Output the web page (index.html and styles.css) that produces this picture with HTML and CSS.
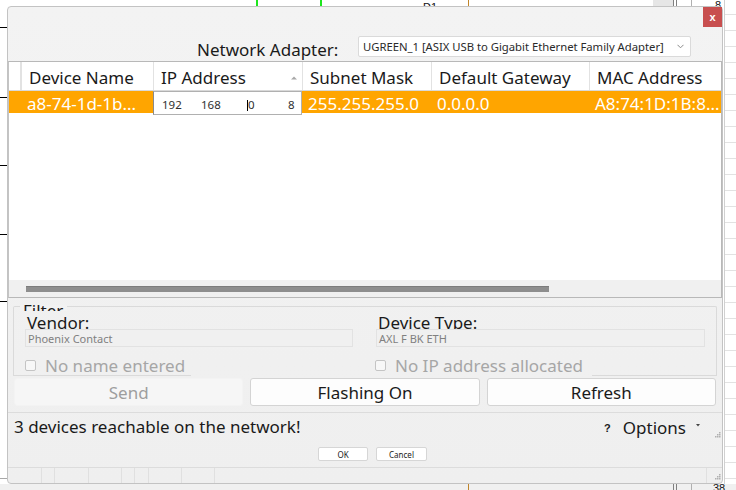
FILE: index.html
```html
<!DOCTYPE html>
<html lang="en">
<head>
  <meta charset="UTF-8">
  <title>Network Adapter</title>
  <link rel="stylesheet" href="styles.css">
</head>
<body>

  <!-- spreadsheet behind the dialog -->
  <div class="sheet">
    <span class="band"></span>
    <span class="tick t1"></span>
    <span class="tick t2"></span>
    <span class="tick t3"></span>
    <span class="tick t4"></span>
    <span class="tick t5"></span>
    <span class="tick t6"></span>
    <span class="green g1"></span>
    <span class="green g2"></span>
    <span class="cell-ref">D1</span>
    <span class="vline orange"></span>
    <span class="shade"></span>
    <span class="vline dark d1"></span>
    <span class="vline dark d2"></span>
    <span class="vline grey"></span>
    <span class="num n1">8</span>
    <span class="num n2">38</span>
    <span class="rows"></span>
  </div>

  <div class="dialog">
    <div class="titlebar">
      <button class="close">x</button>
    </div>

    <div class="adapter">
      <div class="adapter-label">Network Adapter:</div>
      <div class="combo">
        <span class="combo-text">UGREEN_1 [ASIX USB to Gigabit Ethernet Family Adapter]</span>
        <svg width="7" height="5" viewBox="0 0 7 5"><polyline points="0.5,0.8 3.5,3.8 6.5,0.8" fill="none" stroke="#8a8a8a" stroke-width="1"/></svg>
      </div>
    </div>

    <div class="grid">
      <div class="thead">
        <div class="th corner"></div>
        <div class="th">Device Name</div>
        <div class="th th-sort">IP Address
          <svg width="6" height="4" viewBox="0 0 6 4"><polygon points="0,3.5 3,0.5 6,3.5" fill="#a8a8a8"/></svg>
        </div>
        <div class="th">Subnet Mask</div>
        <div class="th">Default Gateway</div>
        <div class="th">MAC Address</div>
      </div>
      <div class="trow">
        <div class="td"></div>
        <div class="td">a8-74-1d-1b...</div>
        <div class="ip-edit">
          <span class="oct o1">192</span>
          <span class="oct o2">168</span>
          <span class="oct o3"><i class="caret"></i>0</span>
          <span class="oct">8</span>
        </div>
        <div class="td">255.255.255.0</div>
        <div class="td">0.0.0.0</div>
        <div class="td td-mac">A8:74:1D:1B:8...</div>
      </div>
      <div class="tbody-empty"></div>
      <div class="hscroll"><div class="thumb"></div></div>
    </div>

    <div class="group">
      <div class="group-title">Filter</div>
      <div class="group-cols">
        <div class="field">
          <div class="field-label">Vendor:</div>
          <div class="field-input">Phoenix Contact</div>
          <div class="check"><span class="box"></span>No name entered</div>
        </div>
        <div class="field">
          <div class="field-label">Device Type:</div>
          <div class="field-input">AXL F BK ETH</div>
          <div class="check check-right"><span class="box"></span>No IP address allocated</div>
        </div>
      </div>
    </div>

    <div class="actions">
      <button class="btn btn-off">Send</button>
      <button class="btn">Flashing On</button>
      <button class="btn">Refresh</button>
    </div>

    <div class="sep"></div>

    <div class="status">
      <div class="status-text">3 devices reachable on the network!</div>
      <div class="status-right">
        <span class="help">?</span>
        <span class="options">Options</span>
        <svg class="opt-arrow" width="4" height="3" viewBox="0 0 4 3"><polygon points="0,0 4,0 2,2.5" fill="#444"/></svg>
        <svg class="grip" width="6" height="6" viewBox="0 0 6 6">
          <rect x="4" y="0" width="1.5" height="1.5" fill="#b0b0b0"/>
          <rect x="2" y="2" width="1.5" height="1.5" fill="#b0b0b0"/>
          <rect x="4" y="2" width="1.5" height="1.5" fill="#b0b0b0"/>
          <rect x="0" y="4" width="1.5" height="1.5" fill="#b0b0b0"/>
          <rect x="2" y="4" width="1.5" height="1.5" fill="#b0b0b0"/>
          <rect x="4" y="4" width="1.5" height="1.5" fill="#b0b0b0"/>
        </svg>
      </div>
    </div>

    <div class="confirm">
      <button class="mini">OK</button>
      <button class="mini mini-wide">Cancel</button>
    </div>

    <div class="strip">
      <span class="sc w34"></span>
      <span class="sc w13"></span>
      <span class="sc w34"></span>
      <span class="sc w33"></span>
      <span class="sc w13"></span>
      <span class="sc w14"></span>
      <span class="sc w33"></span>
      <span class="sc w33"></span>
      <span class="sc w492"></span>
      <span class="sc-end">
        <svg class="grip" width="6" height="6" viewBox="0 0 6 6">
          <rect x="4" y="0" width="1.5" height="1.5" fill="#b0b0b0"/>
          <rect x="2" y="2" width="1.5" height="1.5" fill="#b0b0b0"/>
          <rect x="4" y="2" width="1.5" height="1.5" fill="#b0b0b0"/>
          <rect x="0" y="4" width="1.5" height="1.5" fill="#b0b0b0"/>
          <rect x="2" y="4" width="1.5" height="1.5" fill="#b0b0b0"/>
          <rect x="4" y="4" width="1.5" height="1.5" fill="#b0b0b0"/>
        </svg>
      </span>
    </div>
  </div>

</body>
</html>
```

FILE: styles.css
```css
* {
  box-sizing: border-box;
}

body {
  margin: 0;
  height: 490px;
  overflow: hidden;
  position: relative;
  background: #fff;
  font-family: "Noto Sans", "Open Sans", sans-serif;
  font-size: 17px;
  color: #1a1a1a;
}

button {
  font-family: inherit;
  padding: 0;
}

/* sheet behind */
.sheet {
  position: absolute;
  inset: 0;
}

.sheet span {
  position: absolute;
}

.band {
  left: 0;
  right: 0;
  top: 484px;
  height: 6px;
  background: #f0f0f0;
}

.tick {
  left: 0;
  width: 7px;
  height: 1px;
  background: #000;
}
.t1 { top: 27px; }
.t2 { top: 97px; }
.t3 { top: 165px; }
.t4 { top: 234px; }
.t5 { top: 301px; }
.t6 { top: 478px; background: #a8a8a8; }

.green {
  top: 0;
  width: 2px;
  height: 6px;
  background: #1ee61e;
}
.g1 { left: 256px; }
.g2 { left: 320px; }

.cell-ref,
.num {
  font-family: "Liberation Sans", sans-serif;
  font-size: 11px;
  line-height: 11px;
  color: #111;
}
.cell-ref { left: 423px; top: 2px; }
.n1 { left: 715px; top: 0; }
.n2 { left: 713px; top: 483px; }

.vline {
  top: 0;
  bottom: 0;
  width: 1px;
}
.orange { left: 468px; background: #c0852a; }
.d1 { left: 673px; background: #808080; }
.d2 { left: 676px; background: #808080; }
.grey { left: 691px; background: #b0b0b0; }

.shade {
  left: 653px;
  width: 20px;
  top: 0;
  height: 6px;
  background: #e6e6e6;
}

.rows {
  left: 724px;
  width: 12px;
  top: 0;
  height: 484px;
  border-left: 1px solid #d0d0d0;
  background: repeating-linear-gradient(to bottom, transparent 0 14px, #e2e2e2 14px 15px, transparent 15px 16px);
}

/* dialog */
.dialog {
  position: relative;
  z-index: 1;
  margin: 6px 0 0 7px;
  width: 716px;
  border: 1px solid #c3c3c3;
  border-radius: 4px;
  background: linear-gradient(to bottom, #f3f3f3, #efefef);
}

.titlebar {
  height: 29px;
  display: flex;
  justify-content: flex-end;
}

.close {
  width: 19px;
  height: 20px;
  border: none;
  background: #c84f4f;
  color: #fff;
  font-family: "Liberation Sans", sans-serif;
  font-weight: bold;
  font-size: 11px;
  line-height: 18px;
}

.adapter {
  height: 22px;
  display: flex;
  padding-left: 189px;
}

.adapter-label {
  width: 161px;
  padding-top: 2px;
  line-height: 23px;
}

.combo {
  width: 333px;
  height: 21px;
  background: #fff;
  border: 1px solid #dadada;
  border-radius: 2px;
  display: flex;
  align-items: center;
  justify-content: space-between;
  padding: 0 6px 0 4px;
  font-size: 11.3px;
  letter-spacing: -0.02px;
  color: #2a2a2a;
  white-space: nowrap;
}

/* table */
.grid {
  margin-top: 3px;
  border: 1px solid #b8b8b8;
  border-left-color: #c4c4c4;
  background: #fff;
}

.thead,
.trow {
  display: grid;
  grid-template-columns: 12px 132px 149px 129px 158px 1fr;
}

.thead {
  height: 29px;
  border-bottom: 1px solid #d9d9d9;
}

.th {
  border-left: 1px solid #e2e2e2;
  padding: 4px 0 0 7px;
  line-height: 23px;
  white-space: nowrap;
}

.th.corner {
  border-left: none;
  border-right: 1px solid #e2e2e2;
}

.th-sort {
  display: flex;
  justify-content: space-between;
  padding-right: 5px;
}

.th-sort svg {
  margin-top: 10px;
}

.trow {
  height: 22px;
  background: #ffa500;
  color: #fff;
}

.td {
  padding: 2px 0 0 6px;
  line-height: 22px;
  white-space: nowrap;
}

.td-mac {
  padding-left: 6px;
}

.ip-edit {
  background: #fff;
  border: 1px solid #b0b0b0;
  border-left-color: #8a8a8a;
  display: flex;
  padding: 3px 0 0 8px;
  line-height: 19px;
  font-size: 11.5px;
  color: #303030;
}

.oct { display: inline-block; }
.o1 { width: 39px; }
.o2 { width: 46px; }
.o3 { width: 41px; }

.caret {
  display: inline-block;
  width: 1px;
  height: 11px;
  background: #000;
  vertical-align: -2px;
}

.tbody-empty {
  height: 167px;
}

.hscroll {
  height: 17px;
  background: #f0f0f0;
  padding: 6px 0 0 17px;
}

.thumb {
  width: 523px;
  height: 6px;
  background: #8e8e8e;
  border-top: 1px solid #7c7c7c;
}

/* filter group */
.group {
  margin: 8px 0 0 5px;
  width: 704px;
  border: 1px solid #dadada;
  border-bottom: none;
  border-radius: 2px 2px 0 0;
  padding-bottom: 1px;
  background: linear-gradient(to right, #dadada 177px, transparent 177px 578px, #dadada 578px) bottom / 100% 1px no-repeat;
}

.group-title {
  width: 47px;
  height: 6px;
  margin: -2px 0 0 6px;
  padding-left: 3px;
  line-height: 11px;
  overflow: hidden;
  background: #f2f2f2;
}

.group-cols {
  display: grid;
  grid-template-columns: 328px 329px;
  gap: 23px;
  padding-left: 11px;
}

.field-label {
  height: 18px;
  line-height: 23px;
  overflow: hidden;
  padding-left: 2px;
}

.field-input {
  height: 18px;
  border: 1px solid #e2e2e2;
  background: #f0f0f0;
  font-size: 11px;
  line-height: 17px;
  padding-left: 2px;
  color: #808080;
}

.check {
  margin-top: 6px;
  height: 22px;
  line-height: 25px;
  display: flex;
  color: #a6a6a6;
  white-space: nowrap;
}

.check-right {
  margin-left: -1px;
}

.box {
  width: 11px;
  height: 11px;
  margin: 7px 9px 0 0;
  border: 1px solid #c4c4c4;
  border-radius: 2px;
  background: #f7f7f7;
}

/* buttons */
.actions {
  width: 702px;
  margin: 2px 0 0 6px;
  display: grid;
  grid-template-columns: repeat(3, 1fr);
  gap: 7px;
}

.btn {
  height: 28px;
  border: 1px solid #d4d4d4;
  border-radius: 3px;
  background: #fdfdfd;
  color: #1a1a1a;
  font-size: 17px;
  line-height: 24px;
  padding-top: 2px;
}

.btn-off {
  background: #f6f6f6;
  border-color: #f3f3f3;
  color: #9e9e9e;
}

.sep {
  margin-top: 6px;
  height: 1px;
  background: #dcdcdc;
}

.status {
  height: 34px;
  display: flex;
  justify-content: space-between;
  padding-left: 6px;
}

.status-text {
  padding-top: 2px;
  line-height: 23px;
}

.status-right {
  display: flex;
  align-items: flex-start;
}

.help {
  font-family: "Liberation Sans", sans-serif;
  font-weight: bold;
  font-size: 11px;
  margin-top: 9px;
  margin-right: 12px;
}

.options {
  padding-top: 3px;
  line-height: 23px;
}

.opt-arrow {
  margin: 11px 0 0 10px;
}

.status .grip {
  margin: 19px 1px 0 15px;
}

.confirm {
  display: flex;
  gap: 8px;
  padding-left: 310px;
}

.mini {
  width: 50px;
  height: 14px;
  border: 1px solid #d6d6d6;
  border-radius: 2px;
  background: #fff;
  font-size: 8px;
  line-height: 11px;
  color: #222;
}

.mini-wide {
  width: 51px;
}

.strip {
  margin-top: 6px;
  height: 16px;
  border-top: 1px solid #dcdcdc;
  display: flex;
}

.sc {
  border-right: 1px solid #e0e0e0;
}
.w13 { width: 13px; }
.w14 { width: 14px; }
.w33 { width: 33px; }
.w34 { width: 34px; }
.w492 { width: 492px; }

.sc-end {
  flex: 1;
  display: flex;
  justify-content: flex-end;
  align-items: flex-end;
  padding: 0 1px 3px 0;
}
```
